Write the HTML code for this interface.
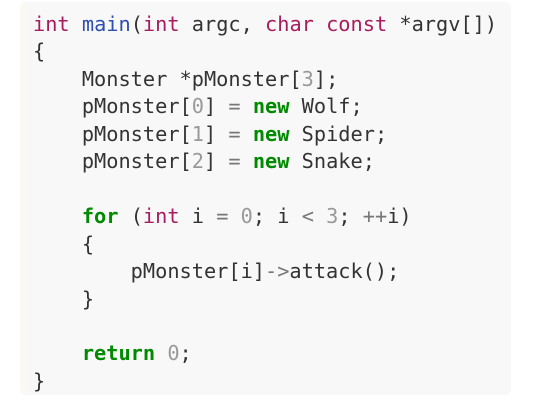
<!DOCTYPE html>
<html><head><style>
body{margin:0;width:556px;height:400px;background:#fff;overflow:hidden}
.box{position:absolute;left:20px;top:2px;width:491px;height:393px;background:#f8f8f8;border-radius:6px;}
.stripe{position:absolute;left:20px;top:2px;width:6px;height:393px;background:#fbfaf0;border-radius:6px 0 0 6px}
pre{position:absolute;left:33px;top:11px;margin:0;font-family:"DejaVu Sans Mono","Liberation Mono",monospace;font-size:20.3px;line-height:27.45px;color:#333;}
.k{color:#a71d5d}.f{color:#2d4fb0}.g{color:#008a00;font-weight:bold}.n{color:#999}.o{color:#777}
</style></head><body>
<div class="box"></div><div class="stripe"></div>
<pre><span class="k">int</span> <span class="f">main</span>(<span class="k">int</span> argc, <span class="k">char const</span> *argv[])
{
    Monster *pMonster[<span class="n">3</span>];
    pMonster[<span class="n">0</span>] <span class="o">=</span> <span class="g">new</span> Wolf;
    pMonster[<span class="n">1</span>] <span class="o">=</span> <span class="g">new</span> Spider;
    pMonster[<span class="n">2</span>] <span class="o">=</span> <span class="g">new</span> Snake;

    <span class="g">for</span> (<span class="k">int</span> i <span class="o">=</span> <span class="n">0</span>; i <span class="o">&lt;</span> <span class="n">3</span>; <span class="o">++</span>i)
    {
        pMonster[i]<span class="o">-&gt;</span>attack();
    }

    <span class="g">return</span> <span class="n">0</span>;
}</pre>
</body></html>
